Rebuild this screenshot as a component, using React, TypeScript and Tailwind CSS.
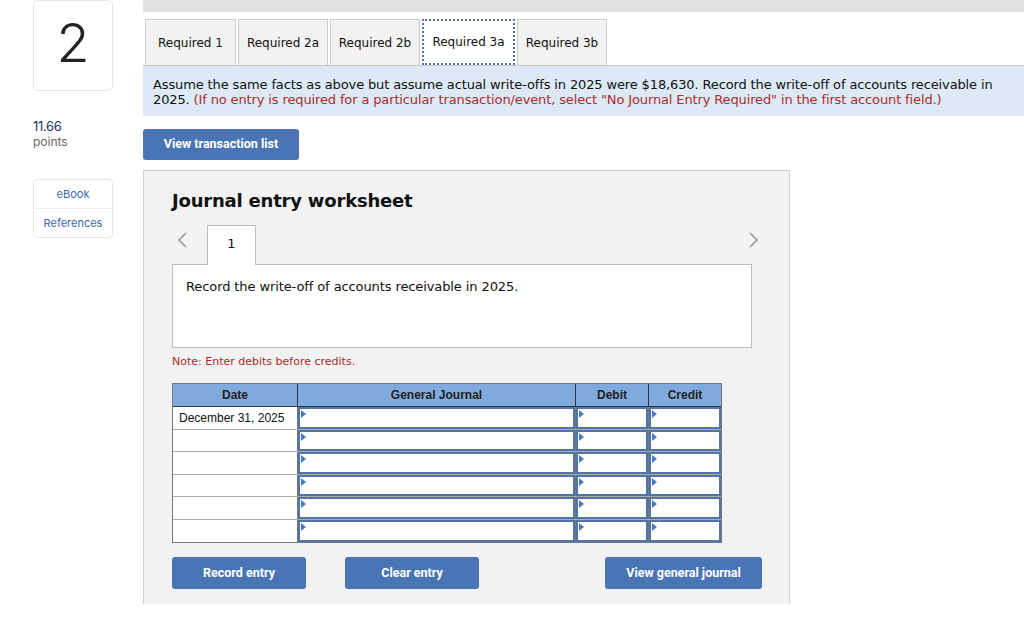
import React from "react";

const tabs = ["Required 1", "Required 2a", "Required 2b", "Required 3a", "Required 3b"];
const tabWidths = ["w-[91px]", "w-[90px]", "w-[90px]", "w-[93px]", "w-[90px]"];

const rows = [0, 1, 2, 3, 4, 5];

const Arrow = () => (
  <span className="absolute top-[1px] left-[1px] w-0 h-0 border-y-[4px] border-y-transparent border-l-[5px] border-l-[#4a78c0]" />
);

const InputCell = ({ last }: { last?: boolean }) => (
  <div className={`h-full bg-white ${last ? "" : "border-r border-[#777]"}`}>
    <div className="relative h-full border-2 border-[#5275a9] bg-white">
      <Arrow />
    </div>
  </div>
);

const App = () => {
  return (
    <div className="w-[1024px] h-[617px] bg-white flex overflow-hidden font-['DejaVu_Sans',sans-serif] text-[#111]">
      {/* left column */}
      <div className="w-[143px] shrink-0 pl-[33px]">
        <div className="w-[80px] h-[91px] border border-[#e6e6e6] rounded-[5px] flex items-center justify-center">
          <span className="font-['Inter',sans-serif] font-light text-[54px] leading-none text-[#222] -mt-[6px]">2</span>
        </div>
        <div className="mt-[28px] font-['Inter',sans-serif] text-[13px] leading-[15px] text-[#1c3566] tracking-[-0.3px]">11.66</div>
        <div className="font-['Inter',sans-serif] text-[12px] leading-[15px] text-[#666]">points</div>
        <div className="mt-[30px] w-[80px] border border-[#e6e6e6] rounded-[4px] font-['Inter',sans-serif] text-[11px] text-[#3a68b0]">
          <div className="h-[29px] flex items-center justify-center border-b border-[#ececec]">eBook</div>
          <div className="h-[28px] flex items-center justify-center">References</div>
        </div>
      </div>

      {/* main column */}
      <div className="flex-1">
        <div className="h-[12px] bg-[#e2e2e2]" />

        {/* tabs */}
        <div className="mt-[7px] flex gap-[2px] pl-[2px]">
          {tabs.map((t, i) => (
            <div
              key={t}
              className={`${tabWidths[i]} h-[46px] flex items-center justify-center text-[12px] ${
                i === 3
                  ? "bg-white border-2 border-dotted border-[#4a78c0]"
                  : "bg-[#f2f2f2] border border-b-0 border-[#cccccc]"
              }`}
            >
              {t}
            </div>
          ))}
        </div>

        {/* instructions */}
        <div className="h-[51px] bg-[#dde9f6] border-t border-[#c8c8c8] px-[10px] pt-[11px] text-[13px] leading-[15px] tracking-[-0.13px]">
          Assume the same facts as above but assume actual write-offs in 2025 were $18,630. Record the write-off of accounts receivable in 2025.{" "}
          <span className="text-[#b02a2a]">
            (If no entry is required for a particular transaction/event, select "No Journal Entry Required" in the first account field.)
          </span>
        </div>

        <button className="mt-[13px] w-[156px] h-[31px] rounded-[3px] bg-[#4a75b4] text-white font-['Roboto',sans-serif] font-bold text-[12.5px]">
          View transaction list
        </button>

        {/* worksheet panel */}
        <div className="mt-[10px] w-[647px] h-[434px] bg-[#f2f2f2] border border-[#cfcfcf] border-b-0 pl-[28px] pr-[20px]">
          <div className="pt-[19px] font-bold text-[18px] leading-[22px] tracking-[-0.2px]">Journal entry worksheet</div>

          <div className="mt-[13px] relative h-[39px]">
            <svg className="absolute left-[4px] top-[7px]" width="12" height="16" viewBox="0 0 12 16">
              <path d="M10 1 L3 8 L10 15" fill="none" stroke="#999" strokeWidth="1.6" />
            </svg>
            <div className="absolute left-[35px] top-0 w-[49px] h-[40px] bg-white border border-[#bdbdbd] border-b-0 z-10 flex items-center justify-center text-[13px] pb-[3px]">
              1
            </div>
            <svg className="absolute left-[576px] top-[7px]" width="12" height="16" viewBox="0 0 12 16">
              <path d="M2 1 L9 8 L2 15" fill="none" stroke="#999" strokeWidth="1.6" />
            </svg>
          </div>

          <div className="w-[580px] h-[84px] bg-white border border-[#bdbdbd] px-[13px] pt-[14px] text-[13px] leading-[16px] tracking-[-0.1px]">
            Record the write-off of accounts receivable in 2025.
          </div>

          <div className="mt-[7px] text-[11px] leading-[14px] text-[#b02a2a]">Note: Enter debits before credits.</div>

          {/* table */}
          <div className="mt-[14px] w-[550px] border border-[#777] font-['Liberation_Sans',sans-serif] text-[12px]">
            <div className="grid grid-cols-[125px_278px_73px_72px] h-[23px] bg-[#80aade] border-b border-[#333] font-bold text-[#222]">
              <div className="flex items-center justify-center border-r border-[#333]">Date</div>
              <div className="flex items-center justify-center border-r border-[#333]">General Journal</div>
              <div className="flex items-center justify-center border-r border-[#333]">Debit</div>
              <div className="flex items-center justify-center">Credit</div>
            </div>
            {rows.map((r) => (
              <div
                key={r}
                className={`grid grid-cols-[125px_278px_73px_72px] h-[22.5px] ${r < 5 ? "border-b border-[#aaa]" : ""}`}
              >
                <div className="bg-white border-r border-[#777] flex items-center pl-[6px] text-[#111]">
                  {r === 0 ? "December 31, 2025" : ""}
                </div>
                <InputCell />
                <InputCell />
                <InputCell last />
              </div>
            ))}
          </div>

          {/* buttons */}
          <div className="mt-[14px] flex font-['Roboto',sans-serif] font-bold text-[12.5px] text-white">
            <button className="shrink-0 w-[134px] h-[32px] rounded-[3px] bg-[#4a75b4]">Record entry</button>
            <button className="shrink-0 ml-[39px] w-[134px] h-[32px] rounded-[3px] bg-[#4a75b4]">Clear entry</button>
            <button className="shrink-0 ml-[126px] w-[157px] h-[32px] rounded-[3px] bg-[#4a75b4]">View general journal</button>
          </div>
        </div>
      </div>
    </div>
  );
};

export default App;
